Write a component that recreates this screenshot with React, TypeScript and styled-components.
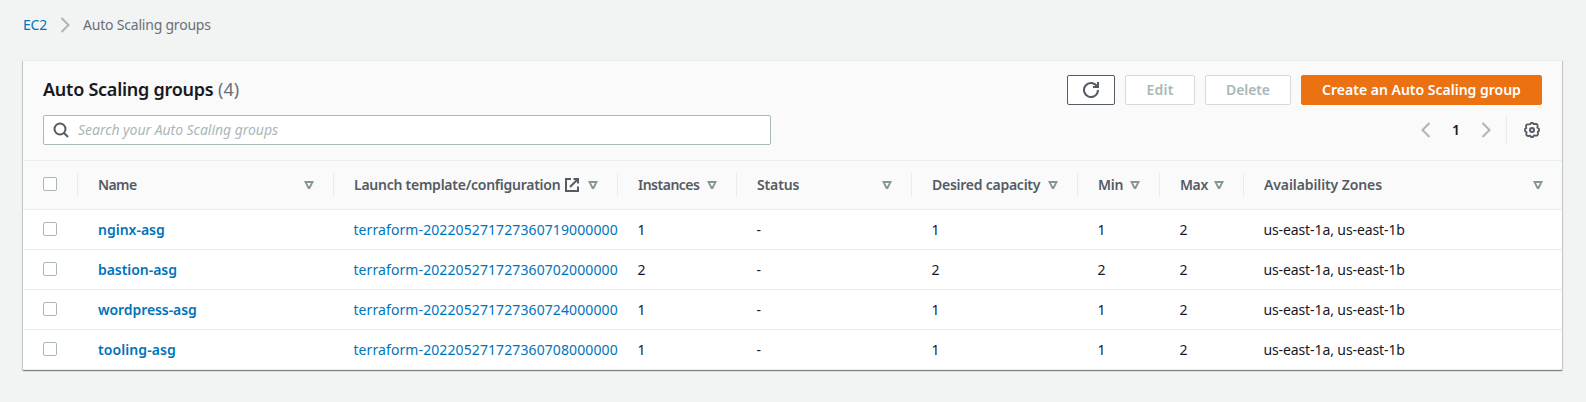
import React from 'react';
import styled, { createGlobalStyle, css } from 'styled-components';

const GlobalStyle = createGlobalStyle`
  *, *::before, *::after { box-sizing: border-box; }
  body {
    margin: 0;
    background: #f2f3f3;
    color: #16191f;
    font: 14px/22px "Noto Sans", "Open Sans", sans-serif;
  }
  button, input { font: inherit; }
`;

const Page = styled.main`
  min-height: 402px;
  padding: 14px 23px 32px;
`;

const Breadcrumbs = styled.nav`
  display: flex;
  align-items: center;
  height: 22px;
  margin-bottom: 24px;
`;

const Crumb = styled.a<{ $current?: boolean }>`
  color: ${({ $current }) => ($current ? '#687078' : '#0073bb')};
  letter-spacing: ${({ $current }) => ($current ? '-0.21px' : '-0.2px')};
  text-decoration: none;
`;

const CrumbSeparator = styled.svg`
  width: 10px;
  height: 16px;
  margin: 0 13px 0 13px;
  fill: none;
  stroke: #aab7b8;
  stroke-width: 2;
`;

const Card = styled.section`
  width: 1539px;
  background: #fff;
  border-top: 1px solid #eaeded;
  box-shadow:
    0 1px 1px 0 rgba(0, 28, 36, 0.3),
    1px 1px 1px 0 rgba(0, 28, 36, 0.15),
    -1px 1px 1px 0 rgba(0, 28, 36, 0.15);
`;

const CardHeader = styled.header`
  height: 100px;
  padding: 14px 20px 15px;
  background: #fafafa;
  border-bottom: 1px solid #eaeded;
`;

const HeaderLine = styled.div`
  display: flex;
  align-items: center;
  justify-content: space-between;
  height: 30px;
  & + & { margin-top: 10px; }
`;

const Title = styled.h2`
  margin: 0 0 2px;
  font-size: 18px;
  font-weight: 600;
  line-height: 22px;
  letter-spacing: -0.25px;
`;

const Counter = styled.span`
  color: #687078;
  font-weight: 400;
  letter-spacing: 0.1px;
`;

const Actions = styled.div`
  display: flex;
  gap: 10px;
`;

type Variant = 'normal' | 'disabled' | 'primary';

const variants = {
  normal: css`background: #fff; border-color: #545b64; color: #545b64;`,
  disabled: css`background: #fff; border-color: #d5dbdb; color: #aab7b8;`,
  primary: css`background: #ec7211; border-color: #ec7211; color: #fff;`,
};

const Button = styled.button<{ $variant: Variant; $width: number; $tracking?: number }>`
  display: flex;
  align-items: center;
  justify-content: center;
  width: ${({ $width }) => $width}px;
  height: 30px;
  padding: 0;
  border: 1px solid;
  border-radius: 2px;
  font-weight: 600;
  letter-spacing: ${({ $tracking = 0 }) => $tracking}px;
  white-space: nowrap;
  ${({ $variant }) => variants[$variant]}
`;

const Icon = styled.svg`
  display: block;
  flex: none;
  width: 16px;
  height: 16px;
  fill: none;
  stroke: #545b64;
  stroke-width: 2;
`;

const SearchBox = styled.label`
  display: flex;
  align-items: center;
  gap: 9px;
  width: 728px;
  height: 30px;
  padding: 0 9px;
  background: #fff;
  border: 1px solid #aab7b8;
  border-radius: 2px;
`;

const SearchInput = styled.input`
  flex: 1;
  min-width: 0;
  padding: 0;
  border: 0;
  outline: 0;
  background: none;
  &::placeholder {
    color: #aab7b8;
    font-style: italic;
    letter-spacing: -0.04px;
    opacity: 1;
  }
`;

const Pagination = styled.div`
  display: flex;
  align-items: center;
  height: 30px;
`;

const PageArrow = styled.svg`
  width: 10px;
  height: 16px;
  fill: none;
  stroke: #aab7b8;
  stroke-width: 2;
`;

const PageNumber = styled.span`
  width: 50px;
  text-align: center;
  font-weight: 600;
`;

const Preferences = styled.div`
  display: flex;
  align-items: center;
  height: 30px;
  margin-left: 15px;
  padding: 0 2px 0 17px;
  border-left: 1px solid #eaeded;
`;

const Table = styled.table`
  width: 100%;
  table-layout: fixed;
  border-collapse: separate;
  border-spacing: 0;
`;

const HeadCell = styled.th`
  height: 49px;
  padding: 0;
  background: #fafafa;
  border-bottom: 1px solid #eaeded;
  color: #545b64;
  font-weight: 600;
  text-align: left;
  vertical-align: middle;
`;

const HeadContent = styled.div<{ $last?: boolean; $tracking?: number }>`
  display: flex;
  align-items: center;
  height: 24px;
  padding: 0 19px 0 20px;
  border-right: ${({ $last }) => ($last ? '0' : '1px solid #eaeded')};
  letter-spacing: ${({ $tracking = 0 }) => $tracking}px;
  white-space: nowrap;
`;

const ExternalIcon = styled.svg`
  flex: none;
  width: 14px;
  height: 14px;
  margin-left: 5px;
  fill: none;
  stroke: #545b64;
  stroke-width: 2;
`;

const SortIcon = styled.svg`
  flex: none;
  width: 10px;
  height: 8px;
  margin-left: auto;
  fill: #879596;
  fill-rule: evenodd;
`;

const Row = styled.tr``;

const Cell = styled.td<{ $tracking?: number }>`
  height: 40px;
  padding: 0 0 0 20px;
  border-bottom: 1px solid #eaeded;
  letter-spacing: ${({ $tracking = 0 }) => $tracking}px;
  white-space: nowrap;
  vertical-align: middle;
  &:nth-child(n + 3) { padding-left: 19.4px; }
`;

const Checkbox = styled.input.attrs({ type: 'checkbox' })`
  display: block;
  appearance: none;
  width: 14px;
  height: 14px;
  margin: 0 0 2px;
  background: #fff;
  border: 1px solid #aab7b8;
  border-radius: 2px;
`;

const Link = styled.a<{ $strong?: boolean }>`
  color: #0073bb;
  font-weight: ${({ $strong }) => ($strong ? 600 : 400)};
  text-decoration: none;
`;

const columns = [
  { label: 'Name', width: 256, tracking: -0.6 },
  { label: 'Launch template/configuration', width: 284, tracking: -0.25, external: true },
  { label: 'Instances', width: 119, tracking: -0.5 },
  { label: 'Status', width: 175, tracking: -0.14 },
  { label: 'Desired capacity', width: 166, tracking: -0.25 },
  { label: 'Min', width: 82, tracking: -0.25 },
  { label: 'Max', width: 84, tracking: -0.4 },
  { label: 'Availability Zones', width: 318, tracking: -0.1 },
];

const groups = [
  { name: 'nginx-asg', tracking: 0, template: 'terraform-202205271727360719000000', instances: 1, desired: 1, min: 1, max: 2 },
  { name: 'bastion-asg', tracking: -0.05, template: 'terraform-202205271727360702000000', instances: 2, desired: 2, min: 2, max: 2 },
  { name: 'wordpress-asg', tracking: -0.08, template: 'terraform-202205271727360724000000', instances: 1, desired: 1, min: 1, max: 2 },
  { name: 'tooling-asg', tracking: 0.09, template: 'terraform-202205271727360708000000', instances: 1, desired: 1, min: 1, max: 2 },
];

export default function App() {
  return (
    <>
      <GlobalStyle />
      <Page>
        <Breadcrumbs>
          <Crumb>EC2</Crumb>
          <CrumbSeparator viewBox="0 0 10 16"><path d="M1.5 1l7 7-7 7" /></CrumbSeparator>
          <Crumb $current>Auto Scaling groups</Crumb>
        </Breadcrumbs>
        <Card>
          <CardHeader>
            <HeaderLine>
              <Title>Auto Scaling groups <Counter>(4)</Counter></Title>
              <Actions>
                <Button $variant="normal" $width={48} aria-label="Refresh">
                  <Icon viewBox="0 0 16 16">
                    <path d="M10 5h5V0" />
                    <path d="M15 8a7 7 0 1 1-.9-3.400" />
                  </Icon>
                </Button>
                <Button $variant="disabled" $width={70} $tracking={0.25}>Edit</Button>
                <Button $variant="disabled" $width={86} $tracking={-0.1}>Delete</Button>
                <Button $variant="primary" $width={241}>Create an Auto Scaling group</Button>
              </Actions>
            </HeaderLine>
            <HeaderLine>
              <SearchBox>
                <Icon viewBox="0 0 16 16">
                  <circle cx="7" cy="7" r="5.500" />
                  <path d="M15 15l-4-4" />
                </Icon>
                <SearchInput placeholder="Search your Auto Scaling groups" />
              </SearchBox>
              <Pagination>
                <PageArrow viewBox="0 0 10 16"><path d="M8.5 1l-7 7 7 7" /></PageArrow>
                <PageNumber>1</PageNumber>
                <PageArrow viewBox="0 0 10 16"><path d="M1.5 1l7 7-7 7" /></PageArrow>
                <Preferences>
                  <Icon viewBox="0 0 16 16">
                    <path d="M6.2 2.2L7 1h2l.8 1.200 1.400-.3 1.400.1.9.9.1 1.500-.3 1.200L15 7v2l-1.300.8.3 1.400-.1 1.400-.9.9-1.500.1-1.500-.3L9 15H7l-.8-1.300-1.400.3-1.500-.1-.9-.9-.1-1.500.3-1.300L1 9V7l1.300-.8L2 4.800l.1-1.500.9-.9 1.500-.1z" strokeWidth="1.800" strokeLinejoin="round" />
                    <circle cx="8" cy="8" r="2" />
                  </Icon>
                </Preferences>
              </Pagination>
            </HeaderLine>
          </CardHeader>
          <Table>
            <colgroup>
              <col width={55} />
              {columns.map((c) => <col key={c.label} width={c.width} />)}
            </colgroup>
            <thead>
              <tr>
                <HeadCell>
                  <HeadContent><Checkbox aria-label="Select all" /></HeadContent>
                </HeadCell>
                {columns.map((c, i) => (
                  <HeadCell key={c.label}>
                    <HeadContent $last={i === columns.length - 1} $tracking={c.tracking}>
                      {c.label}
                      {c.external && (
                        <ExternalIcon viewBox="0 0 14 14">
                          <path d="M6 1H1v12h12V8.500" />
                          <path d="M8.500 1H13v4.500" />
                          <path d="M13 1L5 9" />
                        </ExternalIcon>
                      )}
                      <SortIcon viewBox="0 0 10 8"><path d="M0 0h10L6 8H4zM3 2h4L5.200 5.200h-.4z" /></SortIcon>
                    </HeadContent>
                  </HeadCell>
                ))}
              </tr>
            </thead>
            <tbody>
              {groups.map((g) => (
                <Row key={g.name}>
                  <Cell><Checkbox aria-label={g.name} /></Cell>
                  <Cell $tracking={g.tracking}><Link $strong>{g.name}</Link></Cell>
                  <Cell $tracking={0.1}><Link>{g.template}</Link></Cell>
                  <Cell>{g.instances}</Cell>
                  <Cell>-</Cell>
                  <Cell>{g.desired}</Cell>
                  <Cell>{g.min}</Cell>
                  <Cell>{g.max}</Cell>
                  <Cell $tracking={-0.1}>us-east-1a, us-east-1b</Cell>
                </Row>
              ))}
            </tbody>
          </Table>
        </Card>
      </Page>
    </>
  );
}
